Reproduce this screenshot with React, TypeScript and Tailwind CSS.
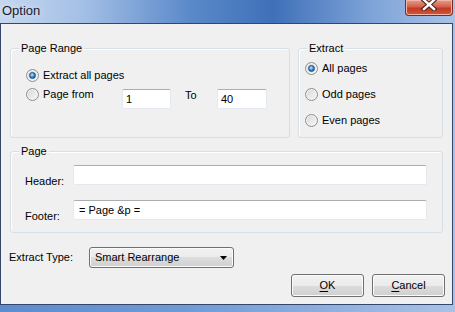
import type { ReactNode } from "react";

const Radio = ({ checked = false }: { checked?: boolean }) => (
  <span className="flex h-[13px] w-[13px] shrink-0 items-center justify-center rounded-full border border-[#8e8f8f] bg-[linear-gradient(135deg,#d6d6d6,#f9f9f9)] shadow-[inset_0_0_0_1px_#f2f2f2]">
    {checked && (
      <span className="h-[7px] w-[7px] rounded-full border border-[#1b4c82] bg-[radial-gradient(circle_at_40%_35%,#c4e8ff,#2f83d4_55%,#14528f)]" />
    )}
  </span>
);

const RadioOption = ({ label, checked }: { label: string; checked?: boolean }) => (
  <div className="flex h-[13px] items-center gap-[4px] leading-[13px]">
    <Radio checked={checked} />
    <span>{label}</span>
  </div>
);

const Group = ({ title, className, children }: { title: string; className: string; children: ReactNode }) => (
  <div className={`relative rounded-[3px] border border-[#d5dfe5] shadow-[inset_1px_1px_0_#fff] ${className}`}>
    <span className="absolute left-[8px] top-[-7px] bg-[#f0f0f0] px-[2px] leading-[13px]">{title}</span>
    {children}
  </div>
);

const TextBox = ({ value, className }: { value?: string; className: string }) => (
  <div
    className={`flex h-[20px] items-center rounded-[2px] border border-[#e3e9ef] border-t-[#abadb3] bg-white leading-[13px] ${className}`}
  >
    {value}
  </div>
);

const Button = ({ hot, rest }: { hot: string; rest: string }) => (
  <button className="flex h-[23px] w-[73px] items-center justify-center rounded-[3px] border border-[#707070] bg-[linear-gradient(#f2f2f2,#ebebeb_50%,#dddddd_50%,#cfcfcf)] leading-[13px] text-black shadow-[inset_0_0_0_1px_#fbfbfb]">
    <span>
      <span className="underline underline-offset-[2px]">{hot}</span>
      {rest}
    </span>
  </button>
);

export default function App() {
  return (
    <div className="flex h-[312px] w-[455px] flex-col bg-[linear-gradient(90deg,#5d8ccd,#6f9ad4_40%,#a9c2e6)] font-['Liberation_Sans',Arial,sans-serif] text-[11px] text-black">
      {/* title bar */}
      <div className="flex h-[23px] items-start justify-between bg-[linear-gradient(90deg,#c5d7ef,#a4c0e6_18%,#5a89c9_42%,#3f70b8_60%,#7fa4d8_82%,#a9c3e7)]">
        <span className="pl-[2px] pt-[3px] text-[13px] leading-[15px] text-[#1a1a2a] [text-shadow:0_0_6px_#e6eefa]">
          Option
        </span>
        <div className="mr-[2px] flex h-[16px] w-[48px] items-start justify-center rounded-b-[4px] border border-t-0 border-[#7d2a20] bg-[linear-gradient(#e79b8b,#d4604a_45%,#c23a22_55%,#d0573b)] shadow-[inset_0_0_0_1px_#f0b6a8]">
          <svg width="18" height="11" viewBox="0 0 18 11">
            <path d="M4 0 L14 9 M14 0 L4 9" stroke="#4a1e18" strokeWidth="4.5" strokeLinecap="square" />
            <path d="M4 0 L14 9 M14 0 L4 9" stroke="#ffffff" strokeWidth="2.5" strokeLinecap="square" />
          </svg>
        </div>
      </div>

      {/* client area */}
      <div className="mr-[2px] flex h-[282px] flex-col border border-[#34466a] bg-[#f0f0f0]">
        <div className="mt-[24px] flex gap-[8px] px-[9px]">
          <Group title="Page Range" className="h-[90px] w-[280px] pl-[15px] pt-[20px]">
            <RadioOption label="Extract all pages" checked />
            <div className="mt-[7px] flex items-start">
              <div className="mt-[-1px] w-[96px]">
                <RadioOption label="Page from" />
              </div>
              <TextBox value="1" className="w-[49px] pl-[3px]" />
              <span className="ml-[14px] w-[32px] leading-[13px]">To</span>
              <TextBox value="40" className="w-[50px] pl-[3px]" />
            </div>
          </Group>
          <Group title="Extract" className="flex h-[90px] w-[145px] flex-col gap-[13px] pl-[6px] pt-[13px]">
            <RadioOption label="All pages" checked />
            <RadioOption label="Odd pages" />
            <RadioOption label="Even pages" />
          </Group>
        </div>

        <div className="mt-[13px] px-[9px]">
          <Group title="Page" className="h-[82px] pl-[14px] pt-[13px]">
            <div className="flex items-start">
              <span className="mt-[10px] w-[48px] leading-[13px]">Header:</span>
              <TextBox className="w-[354px]" />
            </div>
            <div className="mt-[12px] flex items-start">
              <span className="mt-[10px] w-[48px] leading-[13px]">Footer:</span>
              <TextBox value="= Page &p =" className="w-[354px] pl-[5px]" />
            </div>
          </Group>
        </div>

        <div className="mt-[14px] flex items-center pl-[8px]">
          <span className="w-[80px] leading-[13px]">Extract Type:</span>
          <div className="flex h-[21px] w-[145px] items-center justify-between rounded-[3px] border border-[#707070] bg-[linear-gradient(#f2f2f2,#ebebeb_50%,#dddddd_50%,#cfcfcf)] pl-[5px] pr-[6px] shadow-[inset_0_0_0_1px_#fbfbfb]">
            <span className="leading-[13px]">Smart Rearrange</span>
            <svg width="7" height="4" viewBox="0 0 7 4">
              <path d="M0 0 H7 L3.5 4 Z" fill="#000" />
            </svg>
          </div>
        </div>

        <div className="mt-[6px] flex justify-end gap-[8px] pr-[7px]">
          <Button hot="O" rest="K" />
          <Button hot="C" rest="ancel" />
        </div>
      </div>
    </div>
  );
}
